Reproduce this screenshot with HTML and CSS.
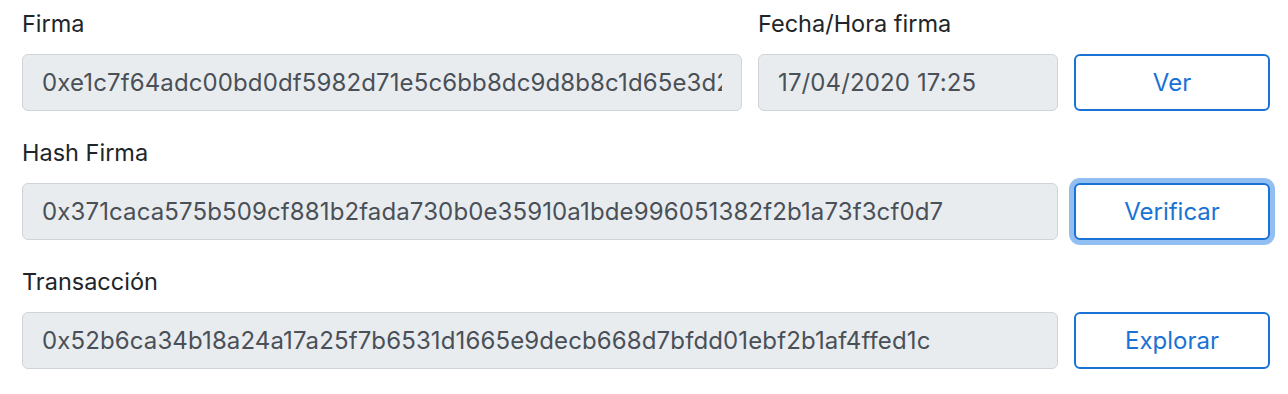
FILE: index.html
```html
<!DOCTYPE html>
<html lang="es">
<head>
<meta charset="utf-8">
<title>Firma</title>
<link rel="stylesheet" href="styles.css">
</head>
<body>
<form class="form">
  <div class="row">
    <div class="group">
      <label class="label">Firma</label>
      <input class="field" type="text" readonly value="0xe1c7f64adc00bd0df5982d71e5c6bb8dc9d8b8c1d65e3d2a7f0c9b1e4d5a6f7e8c9b0a1d2e3f4a5b6c">
    </div>
    <div class="group">
      <label class="label">Fecha/Hora firma</label>
      <input class="field" type="text" readonly value="17/04/2020 17:25">
    </div>
    <div class="action">
      <button type="button" class="btn">Ver</button>
    </div>
  </div>
  <div class="row">
    <div class="group span2">
      <label class="label">Hash Firma</label>
      <input class="field" type="text" readonly value="0x371caca575b509cf881b2fada730b0e35910a1bde996051382f2b1a73f3cf0d7">
    </div>
    <div class="action">
      <button type="button" class="btn btn-focus">Verificar</button>
    </div>
  </div>
  <div class="row">
    <div class="group span2">
      <label class="label">Transacción</label>
      <input class="field" type="text" readonly value="0x52b6ca34b18a24a17a25f7b6531d1665e9decb668d7bfdd01ebf2b1af4ffed1c">
    </div>
    <div class="action">
      <button type="button" class="btn">Explorar</button>
    </div>
  </div>
</form>
</body>
</html>
```

FILE: styles.css
```css
html, body {
  margin: 0;
  padding: 0;
  background: #ffffff;
}

body {
  font-family: Inter, "Liberation Sans", Arial, sans-serif;
  font-size: 24px;
  line-height: 36px;
  color: #212529;
}

.form {
  padding: 6px 18px 0 22px;
}

.row {
  display: grid;
  grid-template-columns: minmax(0, 1fr) 300px 196px;
  column-gap: 16px;
  margin-bottom: 24px;
}

.group {
  display: flex;
  flex-direction: column;
  min-width: 0;
}

.span2 {
  grid-column: 1 / 3;
}

.label {
  display: block;
  margin-bottom: 12px;
  color: #212529;
  font-size: 23.5px;
  line-height: 36px;
}

.field {
  box-sizing: border-box;
  width: 100%;
  height: 57px;
  padding: 0 19px;
  font-family: inherit;
  font-size: 24px;
  letter-spacing: 0.12px;
  color: #495057;
  background: #e9ecef;
  border: 1.5px solid #ced4da;
  border-radius: 6px;
  outline: none;
}

.action {
  display: flex;
  align-items: flex-end;
}

.btn {
  box-sizing: border-box;
  width: 100%;
  height: 57px;
  font-family: inherit;
  font-size: 24px;
  color: #1a73d4;
  background: #ffffff;
  border: 2px solid #1a73d4;
  border-radius: 6px;
  cursor: pointer;
}

.btn-focus {
  box-shadow: 0 0 0 5px rgba(38, 128, 230, 0.5);
}
```
